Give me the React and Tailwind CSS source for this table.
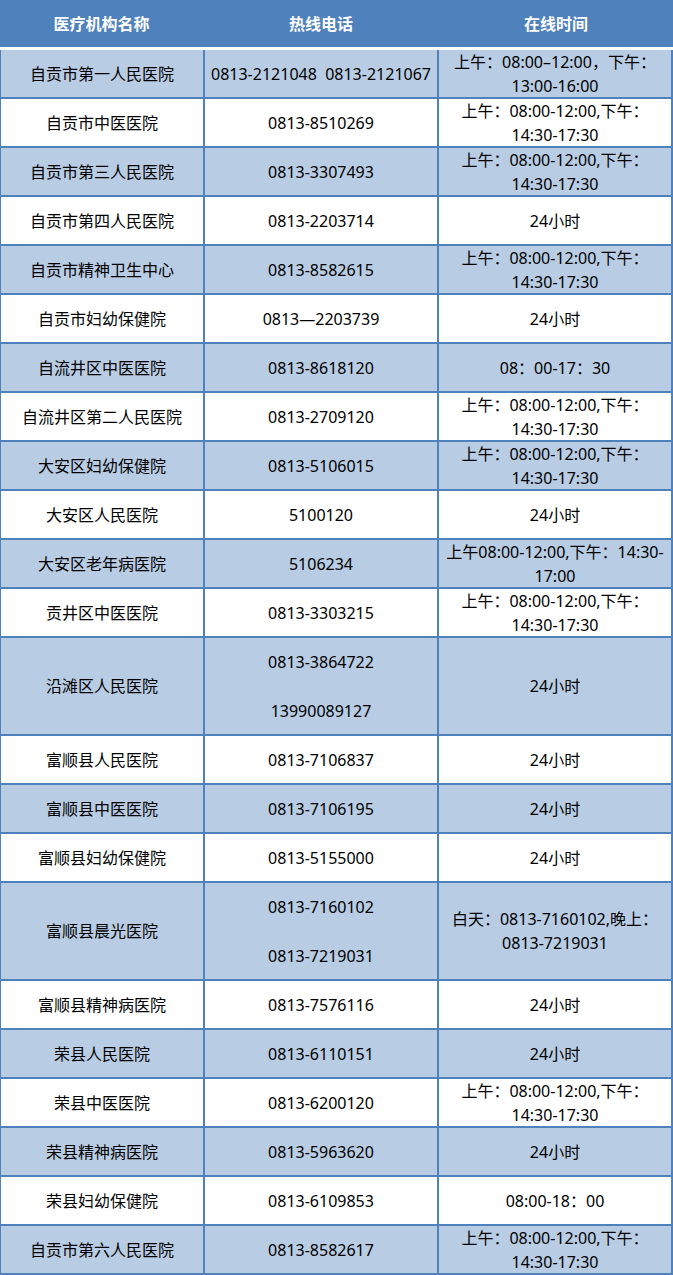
import React from "react";

const AM = ["上午：08:00-12:00,下午：", "14:30-17:30"];
const H24 = ["24小时"];

const rows = [
  ["自贡市第一人民医院", ["0813-2121048\u00a0\u00a00813-2121067"], ["上午：08:00–12:00，下午：", "13:00-16:00"]],
  ["自贡市中医医院", ["0813-8510269"], AM],
  ["自贡市第三人民医院", ["0813-3307493"], AM],
  ["自贡市第四人民医院", ["0813-2203714"], H24],
  ["自贡市精神卫生中心", ["0813-8582615"], AM],
  ["自贡市妇幼保健院", ["0813—2203739"], H24],
  ["自流井区中医医院", ["0813-8618120"], ["08：00-17：30"]],
  ["自流井区第二人民医院", ["0813-2709120"], AM],
  ["大安区妇幼保健院", ["0813-5106015"], AM],
  ["大安区人民医院", ["5100120"], H24],
  ["大安区老年病医院", ["5106234"], ["上午08:00-12:00,下午：14:30-", "17:00"]],
  ["贡井区中医医院", ["0813-3303215"], AM],
  ["沿滩区人民医院", ["0813-3864722", "13990089127"], H24],
  ["富顺县人民医院", ["0813-7106837"], H24],
  ["富顺县中医医院", ["0813-7106195"], H24],
  ["富顺县妇幼保健院", ["0813-5155000"], H24],
  ["富顺县晨光医院", ["0813-7160102", "0813-7219031"], ["白天：0813-7160102,晚上：", "0813-7219031"]],
  ["富顺县精神病医院", ["0813-7576116"], H24],
  ["荣县人民医院", ["0813-6110151"], H24],
  ["荣县中医医院", ["0813-6200120"], AM],
  ["荣县精神病医院", ["0813-5963620"], H24],
  ["荣县妇幼保健院", ["0813-6109853"], ["08:00-18：00"]],
  ["自贡市第六人民医院", ["0813-8582617"], AM],
];

function Lines({ lines }) {
  return (
    <div className="flex flex-col items-center">
      {lines.map((l, i) => (
        <div key={i} className="whitespace-nowrap leading-[24px]">{l}</div>
      ))}
    </div>
  );
}

function Phones({ phones }) {
  if (phones.length === 1) return <Lines lines={phones} />;
  return (
    <div className="flex flex-col items-center">
      <div className="whitespace-nowrap leading-[24px]">{phones[0]}</div>
      <div className="h-[25px]" />
      <div className="whitespace-nowrap leading-[24px]">{phones[1]}</div>
    </div>
  );
}

export default function App() {
  return (
    <div
      className="w-[673px] bg-white text-[16px] text-black"
      style={{ fontFamily: '"Noto Sans", "Noto Sans CJK SC", sans-serif' }}
    >
      <div className="flex h-[47px] bg-[#4f81bd] font-bold text-white">
        <div className="flex w-[203px] items-center justify-center">医疗机构名称</div>
        <div className="flex w-[236px] items-center justify-center">热线电话</div>
        <div className="flex w-[234px] items-center justify-center">在线时间</div>
      </div>
      <div className="h-[3px] bg-white" />
      <div className="border-l border-[#4f81bd]">
        {rows.map(([name, phones, time], i) => {
          const dbl = phones.length > 1;
          const bg = i % 2 === 0 ? "bg-[#b8cce4]" : "bg-white";
          return (
            <div
              key={i}
              className={`flex border-b-2 border-[#4f81bd] ${bg} ${dbl ? "h-[98px]" : "h-[49px]"}`}
            >
              <div className="flex w-[204px] items-center justify-center border-r-2 border-[#4f81bd]">
                <div className="whitespace-nowrap leading-[24px]">{name}</div>
              </div>
              <div className="flex w-[234px] items-center justify-center border-r-2 border-[#4f81bd]">
                <Phones phones={phones} />
              </div>
              <div className="flex w-[234px] items-center justify-center border-r-2 border-[#4f81bd]">
                <Lines lines={time} />
              </div>
            </div>
          );
        })}
      </div>
    </div>
  );
}
